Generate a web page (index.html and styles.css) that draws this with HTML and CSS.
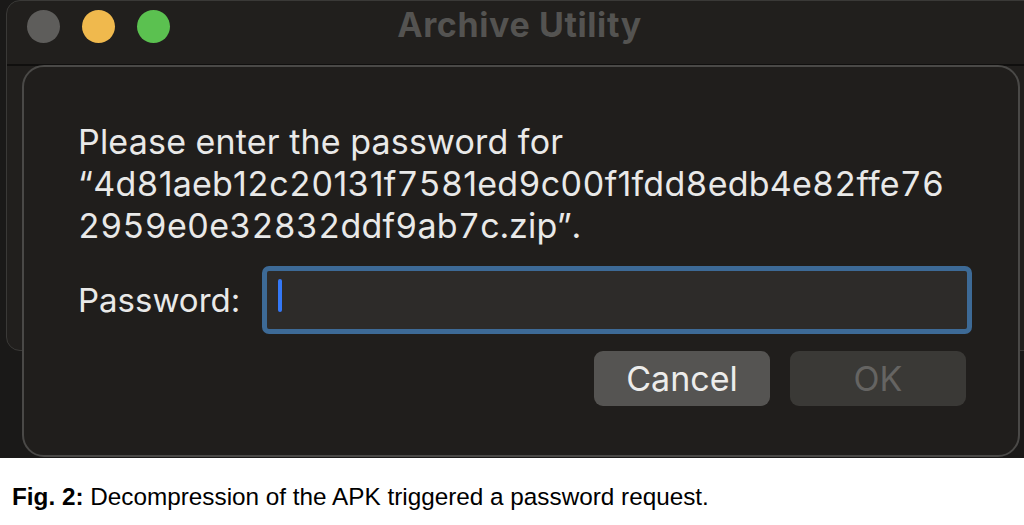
FILE: index.html
```html
<!DOCTYPE html>
<html lang="en">

<head>
    <meta charset="UTF-8">
    <meta name="viewport" content="width=device-width, initial-scale=1.0">
    <title>Archive Utility - Password</title>
    <link rel="stylesheet" href="styles.css">
</head>

<body>

    <div class="screen">
        <div class="window">
            <div class="titlebar">
                <div class="lights">
                    <span class="light light-close"></span>
                    <span class="light light-min"></span>
                    <span class="light light-max"></span>
                </div>
                <div class="title">Archive Utility</div>
            </div>
        </div>

        <!-- password sheet sits over the archive window -->
        <div class="sheet">
            <p class="message">Please enter the password for<br>“4d8<span class="one">1</span>aeb<span class="one">1</span>2c20<span class="one">1</span>3<span class="one">1</span>f758<span class="one">1</span>ed9c00f<span class="one">1</span>fdd8edb4e82ffe76<br>2959e0e32832ddf9ab7c.zip”.</p>
            <div class="field-row">
                <label for="password">Password:</label>
                <div class="field">
                    <span class="caret"></span>
                    <input type="password" id="password">
                </div>
            </div>
            <div class="buttons">
                <button class="btn btn-cancel">Cancel</button>
                <button class="btn btn-ok" disabled>OK</button>
            </div>
        </div>
    </div>

    <p class="caption"><b>Fig. 2:</b> Decompression of the APK triggered a password request.</p>

</body>

</html>
```

FILE: styles.css
```css
body {
    margin: 0;
    background: #ffffff;
    font-family: Inter, "Liberation Sans", sans-serif;
}

.screen {
    position: relative;
    height: 458px;
    background: #1a1918;
    overflow: hidden;
}

.window {
    margin-left: 6px;
    width: 1040px;
    height: 351px;
    background: #211f1d;
    border: 1px solid #3a3937;
    border-radius: 14px;
    box-sizing: border-box;
}

.titlebar {
    position: relative;
    height: 63px;
    border-bottom: 2px solid #100f0e;
    display: flex;
    align-items: center;
}

.lights {
    display: flex;
    gap: 22px;
    padding-left: 20px;
    padding-bottom: 13px;
}

.light {
    width: 33px;
    height: 33px;
    border-radius: 50%;
}

.light-close {
    background: #5e5d5b;
}

.light-min {
    background: #f0b94d;
}

.light-max {
    background: #5bc150;
}

.title {
    position: absolute;
    left: 0;
    right: 0;
    top: 3px;
    text-align: center;
    padding-right: 13px;
    font-size: 34px;
    font-weight: 700;
    letter-spacing: 0.6px;
    color: #545351;
}

.sheet {
    position: absolute;
    left: 22px;
    top: 65px;
    width: 998px;
    height: 392px;
    box-sizing: border-box;
    background: #201e1c;
    border: 2px solid #4a4947;
    border-radius: 22px;
    padding: 54px 46px 0 54px;
    color: #e9e9e8;
}

.message {
    margin: 0;
    font-size: 34px;
    line-height: 42px;
    letter-spacing: 0.2px;
    font-variant-numeric: tabular-nums;
}

.message .one {
    font-variant-numeric: proportional-nums;
}

.field-row {
    display: flex;
    align-items: center;
    margin-top: 19px;
}

.field-row label {
    font-size: 33px;
    width: 184px;
}

.field {
    position: relative;
    width: 710px;
    height: 68px;
    box-sizing: border-box;
    border: 5px solid #3d6a96;
    border-radius: 7px;
    background: #2d2b29;
}

.field input {
    width: 100%;
    height: 100%;
    border: none;
    background: transparent;
    outline: none;
}

.caret {
    position: absolute;
    left: 11px;
    top: 8px;
    width: 4px;
    height: 33px;
    border-radius: 2px;
    background: #3478f6;
}

.buttons {
    display: flex;
    justify-content: flex-end;
    gap: 20px;
    margin-top: 17px;
    padding-right: 6px;
}

.btn {
    width: 176px;
    height: 55px;
    border: none;
    border-radius: 9px;
    font-family: Inter, "Liberation Sans", sans-serif;
    font-size: 34px;
}

.btn-cancel {
    background: #555452;
    color: #ececeb;
}

.btn-ok {
    background: #3a3936;
    color: #656462;
}

.caption {
    margin: 25px 0 0 12px;
    font-family: "Liberation Sans", Arial, sans-serif;
    font-size: 24.3px;
    color: #000000;
}
```
